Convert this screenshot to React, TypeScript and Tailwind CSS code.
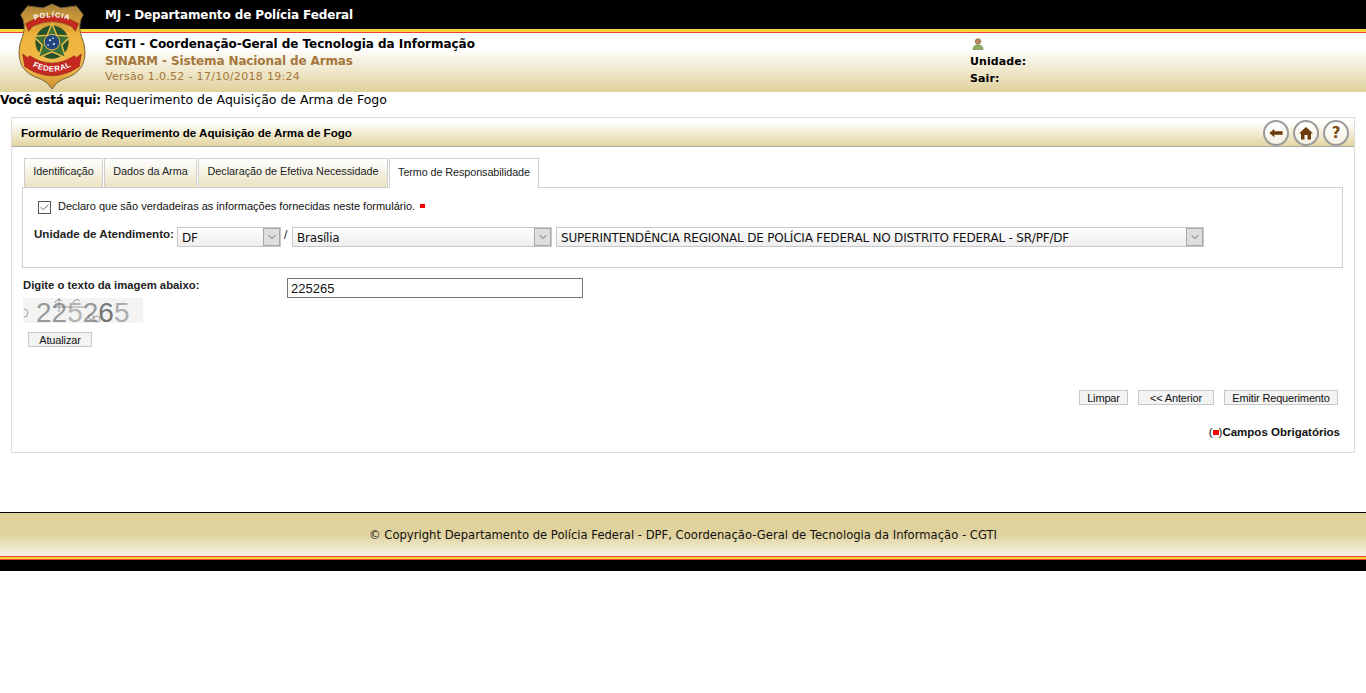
import React from "react";
import { ChevronDown, Check } from "lucide-react";

const verdana = "font-['DejaVu_Sans','Liberation_Sans',sans-serif]";
const arial = "font-['Liberation_Sans',Arial,sans-serif]";

const Badge = () => (
  <svg viewBox="0 0 70 90" className="absolute left-[17px] top-[3px] h-[88px] w-[70px]">
    <defs>
      <linearGradient id="shield" x1="0" y1="0" x2="0" y2="1">
        <stop offset="0" stopColor="#a9803a" />
        <stop offset="0.35" stopColor="#eeb03a" />
        <stop offset="0.75" stopColor="#f4bc4a" />
        <stop offset="1" stopColor="#c98a30" />
      </linearGradient>
      <path id="topArc" d="M12 20 Q35 9 58 20" />
      <path id="bottomArc" d="M11 62 Q35 78 59 62" />
    </defs>
    <path d="M35 1 L44 5 L60 3 L67 12 Q61 22 65 34 Q72 50 66 64 Q60 74 46 78 Q39 81 35 88 Q31 81 24 78 Q10 74 4 64 Q-2 50 5 34 Q9 22 3 12 L10 3 L26 5 Z" fill="url(#shield)" stroke="#75623c" strokeWidth="1" />
    <path d="M8 21 Q35 5 62 21 L59 29 L55 24 Q35 14 15 24 L11 29 Z" fill="#c4281f" stroke="#7d1a14" strokeWidth="0.5" />
    <text fontSize="7.5" fontWeight="700" fill="#fff" fontFamily="Liberation Sans" letterSpacing="0.9">
      <textPath href="#topArc" startOffset="50%" textAnchor="middle">POLÍCIA</textPath>
    </text>
    <path d="M5 52 L10 56 L12 54 Q35 69 58 54 L60 56 L65 52 L63 65 Q35 84 7 65 Z" fill="#c4281f" stroke="#7d1a14" strokeWidth="0.5" />
    <text fontSize="8" fontWeight="700" fill="#fff" fontFamily="Liberation Sans" letterSpacing="0.6">
      <textPath href="#bottomArc" startOffset="50%" textAnchor="middle">FEDERAL</textPath>
    </text>
    <circle cx="35" cy="40" r="17" fill="#27512a" />
    <path d="M35 21 L40 33 L54 34 L45 43 L49 56 L35 50 L21 56 L25 43 L16 34 L30 33 Z" fill="#3b6f38" stroke="#e6bd4a" strokeWidth="1.5" />
    <circle cx="35" cy="40" r="8" fill="#22467f" stroke="#e6bd4a" strokeWidth="1" />
    <circle cx="33" cy="38" r="1" fill="#fff" />
    <circle cx="37" cy="42" r="1" fill="#fff" />
    <circle cx="36" cy="36" r="0.8" fill="#fff" />
    <circle cx="31" cy="43" r="0.8" fill="#fff" />
  </svg>
);

const UserIcon = () => (
  <svg viewBox="0 0 12 12" className="h-3 w-3">
    <circle cx="6" cy="3.5" r="2.8" fill="#b8875a" stroke="#6d6a3a" strokeWidth="0.6" />
    <path d="M1 11.5 Q1 7 6 7 Q11 7 11 11.5 Z" fill="#8fae5a" stroke="#55703a" strokeWidth="0.6" />
  </svg>
);

const RoundButton = ({ children }: { children: React.ReactNode }) => (
  <div className="flex h-[26px] w-[26px] items-center justify-center rounded-full border-2 border-[#9a9a9a] bg-gradient-to-b from-white to-[#f4f0e2]">
    {children}
  </div>
);

const Select = ({ label, className }: { label: string; className: string }) => (
  <div className={`flex h-[20px] items-center justify-between border border-[#c8c8c8] bg-gradient-to-b from-white to-[#eeeeee] pl-[4px] ${className}`}>
    <span className={`pt-[1px] text-[12px] tracking-[-0.21px] text-[#111] ${verdana}`}>{label}</span>
    <span className="flex h-[18px] w-[17px] items-center justify-center border border-[#a8a8a8] bg-[#dedede]">
      <ChevronDown className="h-3 w-3 text-[#444]" strokeWidth={1.5} />
    </span>
  </div>
);

const FormButton = ({ label, className }: { label: string; className: string }) => (
  <button className={`flex h-[15px] items-center justify-center border border-[#c8c8c8] bg-[#f3f3f3] pt-[1px] text-[11px] tracking-[-0.15px] text-[#111] ${arial} ${className}`}>
    {label}
  </button>
);

const tabs = [
  { label: "Identificação", width: "w-[79px]" },
  { label: "Dados da Arma", width: "w-[93px]" },
  { label: "Declaração de Efetiva Necessidade", width: "w-[190px]" },
];

export default function App() {
  return (
    <div className="relative min-h-[693px] bg-white text-black">
      <Badge />
      {/* top bar */}
      <div className={`flex h-[29px] items-center bg-black pl-[105px] text-[12px] font-bold tracking-[-0.11px] text-white ${verdana}`}>
        MJ - Departamento de Polícia Federal
      </div>
      <div className="h-[3px] bg-[#f7d33c]" />
      <div className="h-[1px] bg-[#e8402a]" />
      <div className={`flex h-[59px] bg-gradient-to-b from-white from-[25%] to-[#e0d29c] pl-[105px] ${verdana}`}>
        <div className="w-[865px] pt-[3px]">
          <div className="h-[17px] text-[12px] leading-[17px] font-bold tracking-[-0.04px] text-black">CGTI - Coordenação-Geral de Tecnologia da Informação</div>
          <div className="h-[17px] text-[12px] leading-[17px] font-bold tracking-[-0.12px] text-[#a5763c]">SINARM - Sistema Nacional de Armas</div>
          <div className="h-[14px] text-[11px] leading-[14px] tracking-[0.31px] text-[#a5763c]">Versão 1.0.52 - 17/10/2018 19:24</div>
        </div>
        <div className="pt-[5px] text-[11px] leading-[17px] font-bold tracking-[0.1px]">
          <div className="h-[15px] pl-[2px]"><UserIcon /></div>
          <div>Unidade:</div>
          <div>Sair:</div>
        </div>
      </div>

      {/* breadcrumb */}
      <div className={`h-[25px] text-[12.5px] leading-[16px] ${verdana}`}>
        <b className="text-[12px] tracking-[-0.2px]">Você está aqui:</b> Requerimento de Aquisição de Arma de Fogo
      </div>

      {/* panel */}
      <div className="mx-[11px] h-[336px] w-[1344px] border border-[#dcdcdc]">
        <div className="flex h-[29px] items-center justify-between border-b border-[#a8a8a8] bg-gradient-to-b from-white from-[15%] to-[#e3d5a0] pr-[5px] pl-[9px]">
          <span className={`pt-[2px] text-[11.6px] font-bold whitespace-nowrap text-black ${arial}`}>Formulário de Requerimento de Aquisição de Arma de Fogo</span>
          <div className="flex gap-[4px] pt-[2px]">
            <RoundButton>
              <svg viewBox="0 0 16 12" className="h-[10px] w-[14px]"><path d="M0 6 L6 1 V4 H16 V8 H6 V11 Z" fill="#6b3a0a" /></svg>
            </RoundButton>
            <RoundButton>
              <svg viewBox="0 0 14 14" className="h-[14px] w-[14px]"><path d="M7 1 L14 7.5 H12 V13.5 H8.5 V9 H5.5 V13.5 H2 V7.5 H0 Z" fill="#6b3a0a" /></svg>
            </RoundButton>
            <RoundButton>
              <span className={`text-[15px] leading-none font-bold text-[#7a4a14] ${verdana}`}>?</span>
            </RoundButton>
          </div>
        </div>

        <div className="px-[10px] pt-[11px]">
          {/* tabs */}
          <div className={`relative z-10 flex h-[30px] gap-[1px] pl-[2px] text-[10.8px] text-[#222] ${arial}`}>
            {tabs.map((t) => (
              <div key={t.label} className={`flex h-[29px] items-center justify-center border border-b-0 border-[#d0d0d0] bg-gradient-to-b from-white to-[#ece3c3] pb-[3px] ${t.width}`}>{t.label}</div>
            ))}
            <div className="flex h-[30px] w-[150px] items-center justify-center border border-b-0 border-[#d0d0d0] bg-white pb-[3px] tracking-[-0.08px]">Termo de Responsabilidade</div>
          </div>
          <div className="-mt-[1px] h-[81px] w-[1321px] border border-[#d0d0d0] pt-[10px] pl-[15px]">
            <div className="flex h-[18px] items-center">
              <span className="flex h-[13px] w-[13px] items-center justify-center border border-[#555] bg-white">
                <Check className="h-[11px] w-[11px] text-[#555]" strokeWidth={1.8} />
              </span>
              <span className={`ml-[7px] -translate-y-[1px] text-[11px] text-[#111] ${arial}`}>Declaro que são verdadeiras as informações fornecidas neste formulário.</span>
              <span className="ml-[5px] h-[4px] w-[5px] -translate-y-[1px] bg-[#f00]" />
            </div>
            <div className="mt-[11px] flex items-start">
              <span className={`-ml-[4px] w-[143px] text-[11.6px] leading-[14px] font-bold whitespace-nowrap text-[#222] ${arial}`}>Unidade de Atendimento:</span>
              <Select label="DF" className="w-[104px]" />
              <span className={`w-[11px] pl-[3px] text-[10px] ${verdana}`}>/</span>
              <Select label="Brasília" className="w-[260px]" />
              <Select label="SUPERINTENDÊNCIA REGIONAL DE POLÍCIA FEDERAL NO DISTRITO FEDERAL - SR/PF/DF" className="ml-[4px] w-[648px]" />
            </div>
          </div>

          {/* captcha */}
          <div className="flex pt-[10px] pl-[1px]">
            <div className="w-[264px]">
              <div className={`h-[20px] text-[11.3px] leading-[14px] font-bold whitespace-nowrap text-[#222] ${arial}`}>Digite o texto da imagem abaixo:</div>
              <div className="relative flex h-[25px] w-[120px] items-center bg-[#f3f3f3] pl-[13px]">
                <span className={`translate-y-[2px] text-[28px] leading-[25px] ${arial}`}>
                  <span className="text-[#999]">2</span>
                  <span className="text-[#999]">2</span>
                  <span className="text-[#b4b4b4]">5</span>
                  <span className="text-[#999]">2</span>
                  <span className="text-[#757575]">6</span>
                  <span className="text-[#acacac]">5</span>
                </span>
                <svg viewBox="0 0 120 25" className="absolute inset-0 h-[25px] w-[120px]" fill="none" stroke="#777" strokeWidth="0.7">
                  <path d="M1 11 A4 4 0 0 1 1 19" />
                  <path d="M32 5 A4 4 0 0 1 39 3" />
                  <path d="M50 5 A4 4 0 0 1 57 3" />
                  <path d="M30 9 H62" />
                  <path d="M36 0 V14" />
                  <circle cx="74" cy="21" r="3" />
                  <circle cx="68" cy="19" r="2.5" />
                </svg>
              </div>
              <FormButton label="Atualizar" className="mt-[9px] ml-[5px] w-[64px]" />
            </div>
            <div className={`h-[20px] w-[296px] border border-[#767676] pt-[1px] pl-[3px] text-[13px] leading-[18px] text-[#111] ${arial}`}>225265</div>
          </div>

          {/* actions */}
          <div className="mt-[43px] flex justify-end gap-[10px] pr-[6px]">
            <FormButton label="Limpar" className="w-[49px]" />
            <FormButton label="<< Anterior" className="w-[76px]" />
            <FormButton label="Emitir Requerimento" className="w-[114px]" />
          </div>
          <div className={`mt-[19px] flex items-center justify-end pr-[4px] text-[11.5px] leading-[16px] font-bold text-[#111] ${arial}`}>
            <span className="font-normal">(</span>
            <span className="h-[5px] w-[6px] bg-[#f00]" />
            <span className="font-normal">)</span>
            Campos Obrigatórios
          </div>
        </div>
      </div>

      {/* footer */}
      <div className={`mt-[59px] flex h-[44px] items-center justify-center border-t border-black bg-gradient-to-b from-[#e0d29c] from-[50%] to-[#f7f3e6] pt-[3px] text-[11.6px] text-[#111] ${verdana}`}>
        © Copyright Departamento de Polícia Federal - DPF, Coordenação-Geral de Tecnologia da Informação - CGTI
      </div>
      <div className="h-[1px] bg-[#e8402a]" />
      <div className="h-[2px] bg-[#f7d33c]" />
      <div className="h-[1px] bg-[#e8402a]" />
      <div className="h-[11px] bg-black" />
    </div>
  );
}
